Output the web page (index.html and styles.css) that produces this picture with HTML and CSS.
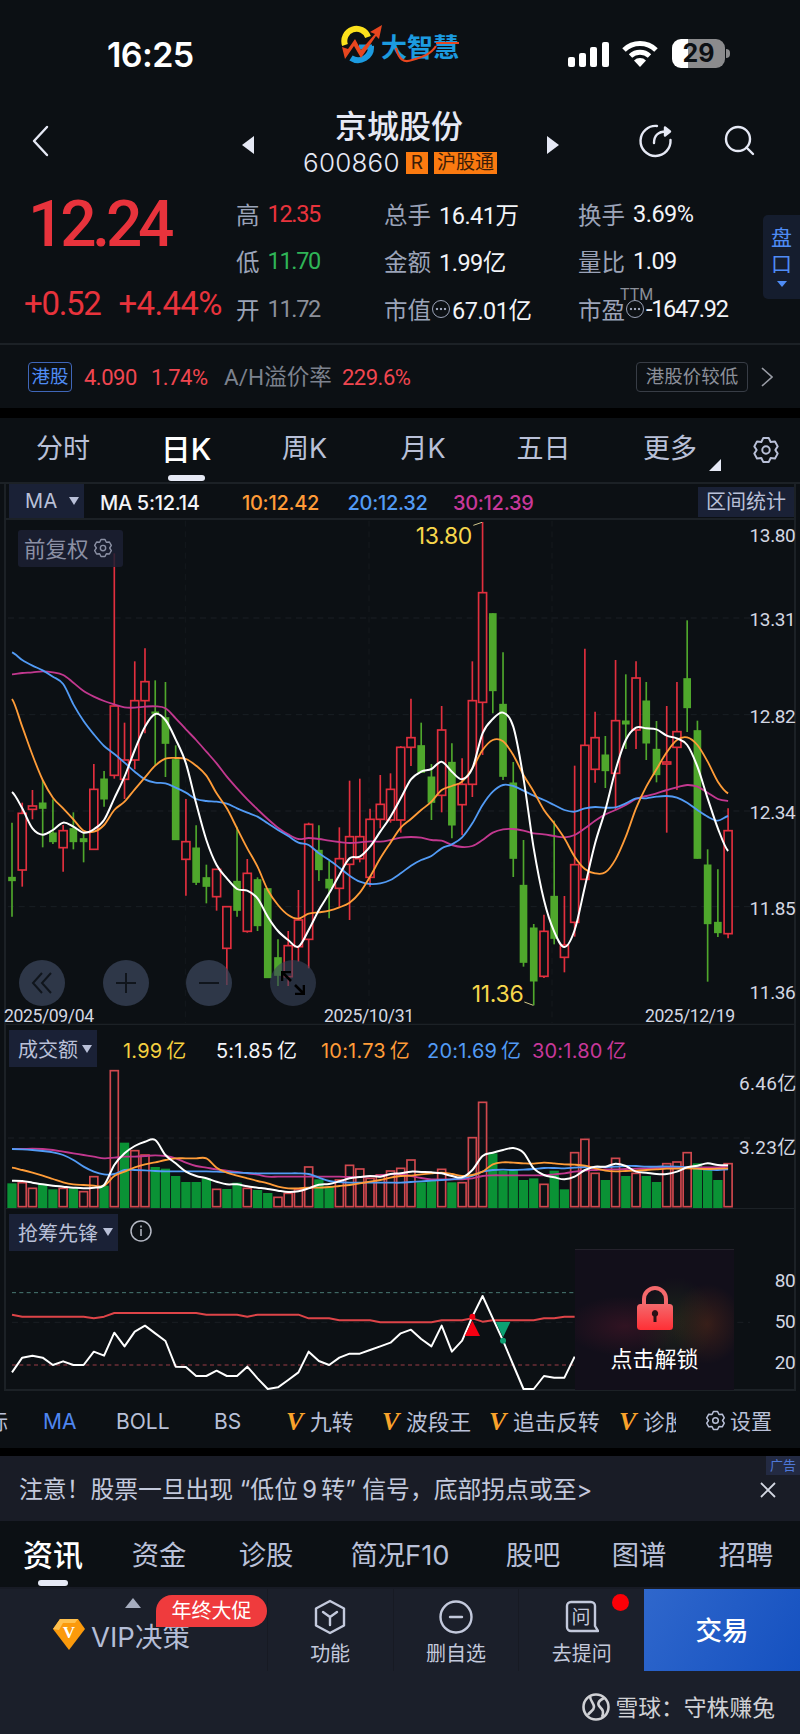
FILE: index.html
```html
<!DOCTYPE html>
<html lang="zh-CN">
    <head>
        <meta charset="utf-8">
        <title>京城股份 600860</title>
        <link rel="stylesheet" href="styles.css">
    </head>
    <body>
        <svg class="sprite" aria-hidden="true">
            <symbol id="gear" viewBox="0 0 24 24">
                <path d="M9.6 1.8h4.8L16 5.1l3.7-.3L22 8.9 20 12l2 3.1-2.3 4.1-3.7-.3-1.6 3.3H9.6L8 18.9l-3.7.3L2 15.1 4 12 2 8.9l2.3-4.1 3.7.3z" />
                <circle cx="12" cy="12" r="3.2" />
            </symbol>
        </svg>

        <div class="status-bar">
            <span class="clock">16:25</span>
            <div class="brand">
                <svg width="44" height="40" viewBox="0 0 44 40">
                    <path d="M4 20A12 12 0 0 1 27 12" fill="none" stroke="#fce11c" stroke-width="6" />
                    <path d="M30 21A13 13 0 0 1 10 33" fill="none" stroke="#1c9be0" stroke-width="6" />
                    <path d="M18 22H31" stroke="#1c9be0" stroke-width="5" />
                    <path d="M1 22l6 2 7-10 6 11L34 9l-5-2L41 0l-3 14-3-3-15 22-7-12-9 13z" fill="#e8461f" />
                </svg>
                <span>大智慧<svg class="swoosh" width="78" height="24" viewBox="0 0 78 24"><path d="M11 9c3 12 8 15 16 12C38 18 46 15 51 7M51 4h23" fill="none" stroke="#e8461f" stroke-width="2.2" /></svg></span>
            </div>
            <div class="signals">
                <svg width="42" height="26" viewBox="0 0 42 26" fill="#fff">
                    <rect x="0" y="16" width="7" height="10" rx="2" />
                    <rect x="11" y="12" width="7" height="14" rx="2" />
                    <rect x="22" y="6" width="7" height="20" rx="2" />
                    <rect x="34" y="1" width="7" height="25" rx="2" />
                </svg>
                <svg width="36" height="27" viewBox="0 0 36 27">
                    <path d="M2 10a23 23 0 0 1 32 0M8.500 16a14 14 0 0 1 19 0" fill="none" stroke="#fff" stroke-width="5" />
                    <path d="M18 27l-6-6.500a8.500 8.500 0 0 1 12 0z" fill="#fff" />
                </svg>
                <span class="battery">29</span>
            </div>
        </div>

        <div class="header">
            <svg class="back" width="18" height="32" viewBox="0 0 18 32"><path d="M15 2L2 16l13 14" /></svg>
            <i class="prev"></i>
            <div class="stock">
                <h1>京城股份</h1>
                <div class="code">
                    <span>600860</span><b>R</b><b>沪股通</b>
                </div>
            </div>
            <i class="next"></i>
            <svg class="share" width="36" height="36" viewBox="0 0 36 36">
                <path d="M19 3A15 15 0 1 0 32.500 17M16 20c0-7 4-11.500 12-11.500" />
                <path d="M27 4.500l5 4-5 4z" fill="#e6e9f5" />
            </svg>
            <svg class="search" width="32" height="32" viewBox="0 0 32 32"><circle cx="14" cy="14" r="12" /><path d="M22.500 22.500l6.500 6.500" /></svg>
        </div>

        <div class="quote">
            <div class="price">
                <strong>12.24</strong>
                <div class="change"><span>+0.52</span><span>+4.44%</span></div>
            </div>
            <dl class="stats">
                <div><dt>高</dt><dd class="up">12.35</dd></div>
                <div><dt>总手</dt><dd>16.41万</dd></div>
                <div><dt>换手</dt><dd>3.69%</dd></div>
                <div><dt>低</dt><dd class="down">11.70</dd></div>
                <div><dt>金额</dt><dd>1.99亿</dd></div>
                <div><dt>量比</dt><dd>1.09</dd></div>
                <div><dt>开</dt><dd class="flat">11.72</dd></div>
                <div><dt>市值</dt><i class="more"></i><dd>67.01亿</dd></div>
                <div><dt>市盈</dt><i class="more"><em>TTM</em></i><dd class="tight">-1647.92</dd></div>
            </dl>
            <div class="handicap">盘<br>口<i></i></div>
        </div>

        <div class="hk-row">
            <span class="hk-tag">港股</span>
            <span class="hk-num hk-price">4.090</span>
            <span class="hk-num hk-rate">1.74%</span>
            <span class="hk-label">A/H溢价率</span>
            <span class="hk-num">229.6%</span>
            <span class="hk-note">港股价较低</span>
            <svg width="12" height="20" viewBox="0 0 12 20"><path d="M1 1l10 9-10 9" /></svg>
        </div>

        <div class="period-tabs">
            <span>分时</span>
            <span class="active">日K</span>
            <span>周K</span>
            <span>月K</span>
            <span>五日</span>
            <span class="has-more">更多</span>
            <svg class="gear" width="28" height="28"><use href="#gear" /></svg>
        </div>

        <div class="charts">
            <div class="legend legend-ma">
                <span class="picker">MA<i></i></span>
                <span class="ma5">MA 5:12.14</span>
                <span class="ma10">10:12.42</span>
                <span class="ma20">20:12.32</span>
                <span class="ma30">30:12.39</span>
                <span class="range-btn">区间统计</span>
            </div>
            <div class="plot">
                <svg id="kline" width="800" height="505" viewBox="0 60 2400 1515"></svg>
                <div class="adjust">前复权<svg class="gear" width="20" height="20"><use href="#gear" /></svg></div>
                <div class="tools">
                    <span><svg width="24" height="24" viewBox="0 0 24 24"><path d="M12 2L3 12l9 10M21 2l-9 10 9 10" /></svg></span>
                    <span><svg width="24" height="24" viewBox="0 0 24 24"><path d="M2 12h20M12 2v20" /></svg></span>
                    <span><svg width="24" height="24" viewBox="0 0 24 24"><path d="M2 12h20" /></svg></span>
                    <span class="expand"><svg width="24" height="24" viewBox="0 0 24 24"><path d="M1 10V1h9M1 1l9 9M23 14v9h-9M23 23l-9-9" /></svg></span>
                </div>
            </div>

            <div class="legend legend-vol">
                <span class="picker">成交额<i></i></span>
                <span class="vol">1.99&thinsp;亿</span>
                <span class="ma5">5:1.85&thinsp;亿</span>
                <span class="ma10">10:1.73&thinsp;亿</span>
                <span class="ma20">20:1.69&thinsp;亿</span>
                <span class="ma30">30:1.80&thinsp;亿</span>
            </div>
            <svg id="volume" class="plot" width="800" height="142" viewBox="0 141 2400 426"></svg>

            <div class="legend legend-ind">
                <span class="picker">抢筹先锋<i></i></span>
                <svg width="22" height="22" viewBox="0 0 22 22"><circle cx="11" cy="11" r="10" /><path d="M11 9v7M11 5.500v2" /></svg>
            </div>
            <div class="plot">
                <svg id="indicator" width="800" height="139" viewBox="0 693 2400 417"></svg>
                <div class="locked">
                    <svg width="36" height="44" viewBox="0 0 36 44">
                        <defs><linearGradient id="lock" x2="0" y2="1"><stop offset="0" stop-color="#f4696c" /><stop offset="1" stop-color="#ff2f35" /></linearGradient></defs>
                        <path d="M7 20v-7a11 11 0 0 1 22 0v7" fill="none" stroke="#f4696c" stroke-width="4" />
                        <rect y="18" width="36" height="26" rx="3.500" fill="url(#lock)" />
                        <path d="M18 24a3.500 3.500 0 0 1 1.500 6.500V36h-3v-5.500A3.500 3.500 0 0 1 18 24z" fill="#2a1015" />
                    </svg>
                    点击解锁
                </div>
            </div>
        </div>

        <div class="indicator-tabs">
            <div class="scroller">
                <span class="cut">标</span>
                <span class="active">MA</span>
                <span>BOLL</span>
                <span>BS</span>
                <span><b>V</b>九转</span>
                <span><b>V</b>波段王</span>
                <span><b>V</b>追击反转</span>
                <span><b>V</b>诊股</span>
            </div>
            <span class="settings"><svg class="gear" width="21" height="21"><use href="#gear" /></svg>设置</span>
        </div>

        <div class="notice">
            <span>注意！股票一旦出现 “低位&thinsp;9&thinsp;转” 信号，底部拐点或至&gt;</span>
            <em>广告</em>
            <svg width="16" height="16" viewBox="0 0 16 16"><path d="M1 1l14 14M15 1L1 15" /></svg>
        </div>

        <div class="info-tabs">
            <span class="active">资讯</span>
            <span>资金</span>
            <span>诊股</span>
            <span>简况F10</span>
            <span>股吧</span>
            <span>图谱</span>
            <span>招聘</span>
        </div>

        <div class="bottom-bar">
            <div class="vip">
                <svg width="32" height="31" viewBox="0 0 32 31">
                    <path d="M7 0h18l7 10-16 21L0 10z" fill="#fb9a0c" />
                    <path d="M7 0h18l-3 4H10zM0 10l7-10 3 4-4 7z" fill="#ffc04d" />
                    <text x="16" y="19" text-anchor="middle">V</text>
                </svg>
                VIP决策
                <i></i>
                <span class="promo">年终大促</span>
            </div>
            <div class="action">
                <svg width="34" height="36" viewBox="0 0 34 36"><path d="M17 2l14 7.500v17L17 34 3 26.500v-17zM10 13l7 5 7-5M17 18v8" /></svg>
                功能
            </div>
            <div class="action">
                <svg width="34" height="36" viewBox="0 0 34 36"><circle cx="17" cy="18" r="15.500" /><path d="M11 18h12" /></svg>
                删自选
            </div>
            <div class="action ask">
                <svg width="34" height="36" viewBox="0 0 34 36"><path d="M6 3h20a4 4 0 0 1 4 4v20l3 5H6a4 4 0 0 1-4-4V7a4 4 0 0 1 4-4z" /><text x="16" y="25" text-anchor="middle">问</text></svg>
                去提问
            </div>
            <div class="trade">交易</div>
        </div>

        <div class="watermark">
            <svg width="28" height="28" viewBox="0 0 28 28"><circle cx="14" cy="14" r="12.500" /><path d="M8 3c0 5 4 7 4 11s-5 5-6 8M22 5c-6 3-7 6-4 9s4 5 2 10" /></svg>
            雪球：守株赚兔
        </div>

        <script src="chart.js"></script>
    </body>
</html>
```
FILE: styles.css
```css
:root {
    --bg: #0c1014;
    --panel: #1b1f2a;
    --chip: #1a2136;
    --line: #1c2126;
    --text: #e6e9f5;
    --muted: #9ba3b8;
    --tab: #b9c0d8;
    --red: #e8333c;
    --green: #2fb457;
    --blue: #4f8cf5;
    --num: Roboto, "Noto Sans CJK SC", sans-serif;
    --ui: Inter, "Noto Sans CJK SC", sans-serif;
}

* {
    box-sizing: border-box;
}

body {
    margin: 0;
    width: 800px;
    height: 1734px;
    overflow: hidden;
    background: var(--bg);
    color: var(--text);
    font-family: var(--ui);
}

svg {
    display: block;
    flex: none;
}

i,
em {
    font-style: normal;
}

span,
dt,
dd {
    white-space: nowrap;
}

.sprite {
    width: 0;
    height: 0;
    position: absolute;
}

.gear {
    fill: none;
    stroke: currentColor;
    stroke-width: 1.7;
    stroke-linejoin: round;
}

/* status bar */

.status-bar {
    height: 96px;
    display: flex;
    align-items: flex-start;
}

.clock {
    width: 341px;
    padding: 34px 0 0 107px;
    font-size: 34px;
    line-height: 42px;
    font-weight: 600;
    letter-spacing: -0.6px;
    color: #fff;
}

.brand {
    width: 227px;
    padding-top: 25px;
    display: flex;
}

.brand span {
    position: relative;
    margin: 2px 0 0 -4px;
    font: 700 26px/38px "Noto Sans CJK SC", sans-serif;
    color: #1c9be0;
}

.swoosh {
    position: absolute;
    left: 4px;
    top: 12px;
}

.signals {
    display: flex;
    align-items: center;
    padding-top: 39px;
}

.signals svg + svg {
    margin: 0 14px 0 12px;
}

.battery {
    position: relative;
    width: 53px;
    height: 29px;
    border-radius: 9px;
    background: linear-gradient(90deg, #fff 16px, #8b8b8d 16px);
    color: #0c1014;
    font-size: 25px;
    line-height: 29px;
    font-weight: 700;
    text-align: center;
}

.battery::after {
    content: "";
    position: absolute;
    right: -5px;
    top: 10px;
    width: 4px;
    height: 9px;
    border-radius: 0 4px 4px 0;
    background: #8b8b8d;
}

/* header */

.header {
    height: 94px;
    display: flex;
    align-items: center;
    padding-bottom: 4px;
}

.header svg {
    fill: none;
    stroke: var(--text);
    stroke-width: 2.4;
    stroke-linecap: round;
    stroke-linejoin: round;
}

.back {
    margin-left: 32px;
}

.prev,
.next {
    border: 9px solid transparent;
    margin-top: 7px;
}

.prev {
    border-right: 12px solid var(--text);
    border-left: 0;
    margin-left: 192px;
}

.next {
    border-left: 12px solid var(--text);
    border-right: 0;
}

.stock {
    width: 293px;
    padding-top: 3px;
    display: flex;
    flex-direction: column;
    align-items: center;
}

h1 {
    margin: 0 0 0 -3px;
    font-size: 32px;
    line-height: 41px;
    font-weight: 500;
}

.code {
    display: flex;
    align-items: center;
    font-size: 26px;
    line-height: 32px;
    font-weight: 300;
    gap: 6px;
    margin-right: 1px;
}

.code span {
    letter-spacing: 0.2px;
}

.code b {
    padding: 0 3px;
    height: 22px;
    background: #fb7a10;
    color: #3a1c08;
    font-size: 19px;
    line-height: 22px;
    font-weight: 400;
}

.code b:first-of-type {
    padding: 0 5px;
}

.share {
    margin-left: 79px;
}

.search {
    margin-left: 50px;
}

/* quote */

.quote {
    height: 155px;
    display: flex;
    border-bottom: 2px solid var(--line);
    position: relative;
    font-family: var(--num);
}

.price {
    width: 236px;
    padding-left: 24px;
    color: var(--red);
}

.price strong {
    display: block;
    margin: 3px 0 0 4px;
    font-size: 64px;
    line-height: 64px;
    font-weight: 500;
    letter-spacing: -4.2px;
}

.change {
    display: flex;
    gap: 18px;
    margin-top: 28px;
    font-size: 33px;
    line-height: 38px;
    letter-spacing: -1.3px;
}

.change span + span {
    letter-spacing: -0.7px;
}

.stats {
    margin: 0;
    display: grid;
    grid-template-columns: 148px 194px 180px;
    grid-template-rows: repeat(3, 47.5px);
    font-size: 23.5px;
}

.stats div {
    display: flex;
    align-items: center;
}

dt {
    color: var(--muted);
}

dd {
    margin: 0 0 0 8px;
    color: #f3f4f8;
    letter-spacing: -0.5px;
}

.stats .up,
.stats .down,
.stats .flat,
.stats .tight {
    letter-spacing: -1.3px;
}

.stats .up {
    color: var(--red);
}

.stats .down {
    color: var(--green);
}

.stats .flat {
    color: #8b8f99;
}

.more {
    position: relative;
    width: 18px;
    height: 18px;
    border: 1.5px solid var(--muted);
    border-radius: 50%;
    margin: 0 2px 0 1px;
    background: radial-gradient(circle, var(--muted) 1.2px, transparent 1.6px) 50% 50% / 4px 4px no-repeat,
        radial-gradient(circle, var(--muted) 1.2px, transparent 1.6px) 2px 50% / 4px 4px no-repeat,
        radial-gradient(circle, var(--muted) 1.2px, transparent 1.6px) 10px 50% / 4px 4px no-repeat;
}

.more + dd {
    margin-left: 0;
}

.more em {
    position: absolute;
    left: -7px;
    top: -15px;
    font-size: 16px;
    line-height: 18px;
    color: #8b8f99;
}

.handicap {
    position: absolute;
    right: 0;
    top: 25px;
    width: 37px;
    height: 84px;
    padding-top: 10px;
    border-radius: 5px 0 0 5px;
    background: #151d2e;
    color: var(--blue);
    font-size: 21px;
    line-height: 26px;
    text-align: center;
}

.handicap i {
    display: block;
    width: 10px;
    margin: 4px auto 0;
    border: 5px solid transparent;
    border-top: 6px solid var(--blue);
}

/* hong kong share */

.hk-row {
    height: 73px;
    border-bottom: 10px solid #000;
    display: flex;
    align-items: center;
    padding: 1px 0 0 28px;
}

.hk-tag {
    border: 1.5px solid #3f66b8;
    border-radius: 4px;
    width: 44px;
    height: 30px;
    color: var(--blue);
    font-size: 18.5px;
    line-height: 26px;
    text-align: center;
}

.hk-num {
    font-family: var(--num);
    font-size: 22px;
    color: #f04650;
    letter-spacing: -0.5px;
}

.hk-price {
    margin-left: 12px;
    width: 67px;
}

.hk-rate {
    width: 73px;
}

.hk-label {
    width: 118px;
    margin-top: -4px;
    font-family: var(--num);
    font-size: 22.6px;
    color: #7c828e;
}

.hk-note {
    margin: 0 13px 0 auto;
    width: 112px;
    height: 30px;
    border: 1.5px solid #383d46;
    border-radius: 4px;
    color: #8b8f99;
    font-size: 18.5px;
    line-height: 26px;
    text-align: center;
}

.hk-row svg {
    margin-right: 27px;
    fill: none;
    stroke: #9a9da6;
    stroke-width: 1.6;
}

/* period tabs */

.period-tabs {
    height: 66px;
    display: grid;
    grid-template-columns: 126px 120px 117px 120px 121px 132px 60px;
    justify-items: center;
    border-bottom: 2px solid var(--line);
    font-size: 27px;
    line-height: 62px;
    color: var(--tab);
}

.period-tabs .active,
.info-tabs .active {
    position: relative;
    font-size: 30px;
    font-weight: 500;
    color: #fff;
}

.active::after {
    content: "";
    position: absolute;
    left: 50%;
    bottom: 1px;
    width: 37px;
    height: 6px;
    margin-left: -18px;
    border-radius: 3px;
    background: var(--text);
}

.has-more {
    position: relative;
}

.has-more::after {
    content: "";
    position: absolute;
    right: -24px;
    top: 41px;
    border-left: 12px solid transparent;
    border-bottom: 12px solid var(--text);
}

.period-tabs .gear {
    margin-top: 18px;
}

/* charts */

.charts {
    margin: 0 4px;
    height: 907px;
    border: solid var(--line);
    border-width: 0 2px 2px;
}

.plot {
    position: relative;
    margin: 0 -6px;
}

.legend {
    display: flex;
    align-items: center;
}

.picker {
    display: flex;
    align-items: center;
    justify-content: space-between;
    height: 37px;
    padding: 0 5px 0 9px;
    margin-left: 3px;
    background: var(--chip);
    color: var(--tab);
    font-size: 20px;
}

.picker i {
    border: 5px solid transparent;
    border-top: 8px solid var(--tab);
    border-bottom: 0;
}

.ma5 {
    color: #f3f4f8;
}

.ma10 {
    color: #ff9c38;
}

.ma20 {
    color: #529bf5;
}

.ma30 {
    color: #c8389a;
}

.legend-ma {
    height: 36px;
    border-bottom: 2px solid var(--line);
    font-size: 20px;
    font-weight: 500;
    letter-spacing: -0.3px;
}

.legend-ma .picker {
    width: 75px;
    height: 34px;
    padding-left: 16px;
    font-weight: 400;
    letter-spacing: 0.5px;
}

.legend-ma .ma5 {
    margin-left: 16px;
    width: 142px;
}

.legend-ma > span:not(.picker):not(.range-btn) {
    padding-top: 3px;
}

.legend-ma .ma10,
.legend-ma .ma20 {
    width: 105.5px;
}

.range-btn {
    margin: 1px 0 0 auto;
    width: 96px;
    height: 30px;
    background: var(--chip);
    color: var(--tab);
    font-size: 20px;
    line-height: 31px;
    font-weight: 400;
    letter-spacing: 0;
    text-align: center;
}

.adjust {
    position: absolute;
    left: 18px;
    top: 10px;
    width: 105px;
    height: 37px;
    display: flex;
    align-items: center;
    gap: 4px;
    padding: 0 0 3px 6px;
    border-radius: 3px;
    background: rgba(28, 32, 50, 0.85);
    color: #8b90a4;
    font-size: 21.5px;
}

.adjust .gear {
    margin-top: 2px;
}

.tools {
    position: absolute;
    left: 19px;
    top: 440px;
    display: flex;
    gap: 37.7px;
}

.tools span {
    width: 46px;
    height: 46px;
    display: flex;
    align-items: center;
    justify-content: center;
    border-radius: 50%;
    background: rgba(58, 68, 90, 0.75);
}

.tools svg {
    fill: none;
    stroke: #10151c;
    stroke-width: 2;
}

.tools .expand {
    background: rgba(58, 68, 90, 0.6);
}

.tools .expand svg {
    stroke: #000;
    stroke-width: 2.6;
}

.legend-vol {
    height: 42px;
    font-size: 20px;
    letter-spacing: 0.2px;
    padding-top: 5px;
}

.legend-vol span:not(.picker) {
    padding-top: 2px;
}

.legend-vol .picker {
    width: 88px;
    letter-spacing: 0;
}

.legend-vol .vol {
    margin-left: 26px;
    width: 93px;
    color: #f5d040;
}

.legend-vol .ma5 {
    width: 105px;
}

.legend-vol .ma10 {
    width: 106px;
}

.legend-vol .ma20 {
    width: 105px;
}

.legend-ind {
    height: 42px;
}

.legend-ind .picker {
    width: 109px;
    margin-top: 4px;
}

.legend-ind svg {
    margin: 1px 0 0 12px;
    fill: none;
    stroke: #b5b9c4;
    stroke-width: 1.5;
}

.locked {
    position: absolute;
    left: 575px;
    top: -2px;
    width: 159px;
    height: 141px;
    padding-top: 36px;
    display: flex;
    flex-direction: column;
    align-items: center;
    gap: 14px;
    border-top: 1px solid #25222c;
    background: radial-gradient(ellipse 36px 40px at 132px 74px, rgba(70, 35, 25, 0.7), transparent),
        radial-gradient(ellipse 60px 30px at 50px 76px, rgba(56, 20, 36, 0.8), transparent),
        radial-gradient(ellipse 40px 45px at 100px 72px, rgba(32, 46, 26, 0.7), transparent), #120f1a;
    color: #fff;
    font-size: 22px;
    line-height: 30px;
}

.grid {
    fill: none;
    stroke: #1a1f24;
    stroke-width: 3;
    stroke-dasharray: 18 14;
}

.grid-v {
    stroke: #14191d;
}

.frame {
    stroke: var(--line);
    stroke-width: 4;
}

.axis {
    font-family: var(--num);
    font-size: 57px;
    letter-spacing: -1.2px;
    fill: #d3d7e2;
    text-anchor: end;
}

.axis-amount {
    letter-spacing: 1px;
}

.date {
    font-family: var(--num);
    font-size: 53px;
    letter-spacing: -1.3px;
    fill: #d3d7e2;
}

.peak {
    font-size: 69px;
    font-weight: 400;
    letter-spacing: -1px;
    fill: #f7d74c;
    text-anchor: end;
}

.peak-line {
    stroke: #cfc58a;
    stroke-width: 3;
}

.candle-up,
.vol-up {
    fill: var(--bg);
    stroke: #e22f3e;
    stroke-width: 5;
}

.candle-down {
    fill: #4fa72c;
    stroke: #4fa72c;
    stroke-width: 5;
}

.vol-up {
    stroke: #d0484e;
    fill: none;
}

.vol-down {
    fill: #0a9235;
}

.curve {
    fill: none;
    stroke-width: 5.5;
    stroke-linejoin: round;
}

.curve-5 {
    stroke: #fff;
    stroke-width: 6;
}

.curve-10 {
    stroke: #ff9c38;
}

.curve-20 {
    stroke: #529bf5;
}

.curve-30 {
    stroke: #c2388f;
}

.curve-cost {
    stroke: #de4448;
    stroke-width: 6;
}

.level-high {
    stroke: #4a7a74;
    stroke-dasharray: 12 10;
}

.level-low {
    stroke: #9a3c46;
    stroke-dasharray: 12 10;
}

.buy {
    fill: #f50012;
}

.sell {
    fill: #0ca173;
}

/* indicator tabs */

.indicator-tabs {
    height: 65px;
    border-bottom: 8px solid #000;
    padding-top: 4px;
    display: flex;
    align-items: center;
    font-size: 21px;
    color: var(--tab);
}

.scroller {
    width: 676px;
    overflow: hidden;
    display: flex;
}

.scroller span {
    flex: none;
    line-height: 32px;
}

.scroller .cut {
    margin-left: -13px;
    width: 56px;
}

.scroller .active {
    color: #4f86f0;
    width: 73px;
}

.scroller .active::after {
    display: none;
}

.scroller span:nth-child(3) {
    width: 98px;
}

.scroller span:nth-child(4) {
    width: 72px;
}

.scroller span:nth-child(5) {
    width: 96px;
}

.scroller span:nth-child(6) {
    width: 107px;
}

.scroller span:nth-child(7) {
    width: 130px;
}

.scroller span:nth-child(n + 5) {
    font-size: 21.7px;
}

.scroller b {
    display: inline-block;
    width: 24px;
    font: italic 700 26px/30px "Liberation Serif", serif;
    color: #f9a32b;
}

.settings {
    display: flex;
    align-items: center;
    gap: 4px;
    margin-left: 29px;
    padding-bottom: 3px;
}

/* ad notice */

.notice {
    position: relative;
    height: 65px;
    background: #191c26;
    padding: 3px 24px 0 19px;
    display: flex;
    align-items: center;
    justify-content: space-between;
    color: #c3c9dc;
    font-size: 23.8px;
}

.notice span {
    padding-bottom: 6px;
}

.notice em {
    position: absolute;
    right: 0;
    top: 0;
    width: 34px;
    height: 19px;
    background: #232a42;
    color: #4f78d8;
    font-size: 13px;
    line-height: 18px;
    text-align: center;
}

.notice svg {
    stroke: #d3d7e2;
    stroke-width: 1.8;
}

/* info tabs */

.info-tabs {
    height: 66px;
    display: grid;
    grid-template-columns: 106px 106px 108px 160px 106px 106px 108px;
    justify-items: center;
    font-size: 27.3px;
    line-height: 69px;
    color: var(--tab);
}

.info-tabs .active::after {
    width: 30px;
    margin-left: -15px;
    bottom: 4px;
}

/* bottom bar */

.bottom-bar {
    height: 84px;
    display: flex;
    background: var(--panel);
    border-top: 2px solid #181b25;
}

.vip {
    position: relative;
    width: 267px;
    padding: 9px 0 0 53px;
    display: flex;
    align-items: center;
    gap: 6px;
    font-size: 27.5px;
    color: #b4bdd6;
}

.vip text {
    font: 700 17px "Liberation Serif", serif;
    fill: #fff;
}

.vip i {
    position: absolute;
    left: 125px;
    top: 9px;
    border: 8px solid transparent;
    border-top: 0;
    border-bottom: 10px solid #a6adbf;
}

.promo {
    position: absolute;
    left: 156px;
    top: 6px;
    width: 111px;
    height: 32px;
    border-radius: 16px 16px 16px 0;
    background: #ef3b3d;
    color: #fff;
    font-size: 20px;
    line-height: 33px;
    text-align: center;
}

.action {
    position: relative;
    width: 126px;
    padding-top: 10px;
    display: flex;
    flex-direction: column;
    align-items: center;
    gap: 4px;
    font-size: 20px;
    line-height: 30px;
    color: #c3c9dc;
    border-left: 1px solid #171a23;
}

.action svg {
    fill: none;
    stroke: #c3c9dc;
    stroke-width: 2.4;
    stroke-linejoin: round;
    stroke-linecap: round;
}

.action text {
    font-size: 19px;
    fill: #c3c9dc;
    stroke: none;
}

.ask::after {
    content: "";
    position: absolute;
    left: 93px;
    top: 5px;
    width: 17px;
    height: 17px;
    border-radius: 50%;
    background: #fb0007;
}

.trade {
    margin-left: auto;
    width: 156px;
    background: linear-gradient(120deg, #2f67cc, #1551c0);
    color: #fff;
    font-size: 26.5px;
    line-height: 83px;
    font-weight: 500;
    text-align: center;
}

.watermark {
    height: 63px;
    padding: 8px 25px 0 0;
    display: flex;
    align-items: center;
    justify-content: flex-end;
    gap: 5px;
    background: var(--panel);
    color: #d0d1d5;
    font-size: 22.8px;
}

.watermark svg {
    fill: none;
    stroke: #d0d1d5;
    stroke-width: 2.6;
}
```
FILE: chart.js
```js
// All plots are drawn on a 2400 wide canvas, one column per trading day.
const NS = 'http://www.w3.org/2000/svg';
const START = 36;
const STEP = 30.69;

// [rising, high, body top, body bottom, low]
const candles = [
    [0, 968, 1131, 1143, 1250], [1, 908, 940, 1110, 1160], [1, 870, 918, 928, 958], [0, 840, 908, 926, 1042],
    [0, 898, 998, 1026, 1032], [1, 975, 992, 1043, 1115], [0, 937, 985, 1026, 1048], [0, 1000, 1015, 1026, 1087],
    [1, 792, 868, 1048, 1050], [0, 813, 836, 898, 920], [1, 160, 618, 826, 836], [1, 668, 780, 838, 897],
    [1, 484, 602, 780, 808], [1, 445, 545, 602, 700], [0, 541, 635, 641, 797], [0, 546, 652, 731, 831],
    [0, 736, 778, 1020, 1020], [1, 897, 1025, 1078, 1187], [0, 976, 1043, 1148, 1155], [0, 1094, 1132, 1160, 1210],
    [1, 1108, 1108, 1190, 1232], [1, 1218, 1220, 1345, 1455], [0, 980, 1143, 1232, 1250], [1, 1077, 1120, 1294, 1298],
    [0, 1132, 1138, 1278, 1293], [0, 1165, 1165, 1434, 1434], [0, 1318, 1372, 1427, 1458], [1, 1293, 1337, 1430, 1458],
    [1, 1170, 1260, 1340, 1385], [1, 968, 973, 1318, 1405], [0, 976, 1050, 1110, 1143], [0, 1082, 1137, 1165, 1255],
    [1, 982, 1076, 1165, 1220], [1, 842, 1010, 1093, 1260], [1, 836, 1010, 1076, 1087], [1, 926, 958, 1132, 1160],
    [1, 825, 913, 958, 985], [1, 820, 868, 960, 968], [1, 738, 742, 960, 998], [1, 596, 713, 742, 798],
    [0, 668, 736, 818, 818], [0, 792, 830, 908, 960], [1, 618, 690, 886, 937], [0, 730, 786, 976, 1015],
    [1, 775, 853, 914, 1006], [1, 484, 602, 853, 891], [1, 66, 278, 607, 765], [0, 340, 340, 573, 640],
    [0, 457, 612, 830, 840], [0, 786, 848, 1076, 1131], [0, 1020, 1155, 1388, 1400], [0, 1272, 1283, 1444, 1516],
    [1, 1244, 1294, 1429, 1434], [0, 962, 1188, 1316, 1333], [1, 1188, 1335, 1372, 1417], [1, 797, 1094, 1267, 1310],
    [1, 446, 736, 1138, 1138], [1, 635, 713, 808, 848], [0, 708, 764, 813, 864], [1, 480, 662, 820, 930],
    [0, 523, 662, 673, 747], [1, 484, 534, 690, 747], [0, 546, 602, 730, 780], [0, 663, 747, 825, 847],
    [1, 618, 786, 792, 998], [1, 546, 695, 742, 870], [0, 361, 535, 624, 696], [0, 662, 691, 1076, 1076],
    [0, 1048, 1094, 1272, 1445], [0, 1108, 1266, 1299, 1311], [1, 925, 992, 1301, 1315],
];

const priceLines = {
    30: [523, 519, 517, 514, 517, 525, 548, 573, 590, 603, 613, 622, 623, 620, 619, 625, 655, 688, 720, 755, 790, 830, 865, 898, 928, 957, 983, 1003, 1017, 1014, 1017, 1022, 1026, 1029, 1027, 1024, 1025, 1020, 1013, 1011, 1013, 1020, 1022, 1035, 1041, 1038, 1020, 998, 988, 987, 992, 1000, 1003, 1008, 1012, 1005, 985, 962, 943, 930, 915, 897, 888, 880, 870, 862, 855, 860, 878, 897, 903],
    20: [457, 480, 497, 511, 530, 552, 613, 663, 703, 738, 762, 788, 815, 838, 848, 850, 863, 878, 897, 903, 905, 911, 925, 938, 950, 970, 990, 1008, 1028, 1035, 1060, 1080, 1103, 1127, 1145, 1152, 1150, 1140, 1120, 1097, 1080, 1068, 1045, 1033, 1012, 970, 915, 875, 855, 858, 872, 887, 900, 915, 930, 935, 925, 921, 923, 922, 910, 895, 895, 890, 888, 893, 908, 930, 950, 962, 948],
    10: [597, 680, 765, 840, 893, 925, 958, 992, 995, 975, 930, 905, 868, 832, 797, 776, 774, 777, 797, 827, 880, 925, 985, 1045, 1100, 1170, 1215, 1245, 1256, 1241, 1237, 1232, 1222, 1208, 1178, 1130, 1075, 1028, 983, 957, 930, 905, 870, 858, 845, 805, 750, 720, 724, 765, 825, 875, 930, 970, 1015, 1070, 1107, 1120, 1117, 1078, 1010, 925, 860, 808, 757, 720, 712, 735, 785, 845, 880],
    5: [876, 925, 985, 1004, 990, 968, 980, 998, 988, 960, 895, 830, 750, 680, 642, 660, 718, 790, 910, 1020, 1095, 1135, 1167, 1172, 1195, 1250, 1293, 1320, 1340, 1290, 1230, 1180, 1125, 1075, 1070, 1040, 995, 950, 895, 838, 815, 807, 785, 815, 838, 805, 700, 657, 638, 680, 835, 1045, 1200, 1295, 1341, 1290, 1160, 1030, 930, 810, 720, 683, 685, 688, 707, 715, 735, 800, 895, 985, 1053],
};

// r = rising day, g = falling day, ten days per group
const volumeDays = 'grrggrgrrg rgrrgggggg rggrggrrrr ggrrrrrrrr ggrgrrrggg ggrggrrrgr grggrrrggg r'.replaceAll(' ', '');
const volumeTops = [490, 488, 505, 493, 508, 505, 505, 515, 470, 497, 152, 368, 392, 405, 441, 446, 468, 486, 486, 475, 508, 507, 488, 505, 510, 519, 532, 520, 508, 441, 478, 500, 480, 436, 447, 475, 465, 453, 445, 420, 487, 482, 448, 487, 488, 353, 247, 400, 452, 448, 480, 475, 493, 452, 508, 398, 358, 460, 480, 415, 468, 460, 468, 486, 431, 426, 398, 430, 445, 480, 431];

const volumeLines = {
    5: [482, 483, 488, 493, 497, 500, 503, 505, 503, 495, 435, 400, 378, 365, 360, 405, 430, 455, 468, 475, 485, 493, 493, 499, 503, 507, 512, 516, 514, 505, 494, 492, 484, 475, 471, 468, 470, 462, 460, 455, 456, 457, 460, 468, 472, 450, 408, 398, 390, 384, 398, 445, 465, 472, 478, 470, 450, 440, 440, 431, 438, 455, 458, 462, 462, 455, 442, 437, 430, 435, 436],
    10: [443, 450, 458, 467, 477, 487, 493, 495, 497, 497, 468, 455, 442, 433, 427, 420, 415, 415, 415, 415, 443, 458, 467, 475, 483, 490, 500, 505, 505, 503, 503, 501, 498, 495, 490, 485, 480, 473, 468, 467, 463, 460, 458, 462, 468, 465, 455, 433, 427, 428, 430, 431, 428, 430, 433, 434, 437, 445, 452, 454, 453, 452, 450, 448, 446, 446, 445, 446, 447, 446, 445],
    20: [387, 388, 390, 393, 397, 405, 420, 440, 455, 463, 462, 450, 450, 451, 453, 454, 454, 454, 454, 454, 455, 456, 458, 459, 460, 460, 460, 460, 460, 462, 473, 483, 486, 488, 488, 488, 488, 488, 488, 486, 484, 482, 480, 478, 475, 468, 455, 450, 449, 450, 449, 447, 444, 444, 445, 443, 441, 441, 441, 440, 438, 438, 440, 440, 439, 440, 442, 446, 449, 450, 448],
    30: [387, 387, 386, 387, 390, 395, 400, 405, 410, 415, 413, 410, 410, 408, 406, 408, 415, 428, 438, 443, 448, 452, 456, 460, 464, 470, 470, 470, 470, 470, 470, 470, 470, 471, 471, 469, 466, 463, 463, 468, 474, 478, 478, 478, 478, 475, 468, 466, 466, 466, 466, 466, 466, 463, 460, 455, 452, 450, 448, 448, 447, 446, 445, 444, 443, 442, 442, 442, 442, 442, 440],
};

const cost = [884, 890, 890, 890, 890, 890, 890, 890, 895, 890, 879, 879, 879, 879, 879, 879, 879, 879, 879, 884, 884, 884, 884, 890, 884, 884, 884, 884, 884, 895, 895, 895, 901, 901, 901, 901, 907, 907, 907, 907, 907, 907, 901, 901, 901, 895, 905, 901, 901, 901, 901, 901, 895, 895, 890, 890];
const chips = [1057, 1013, 1007, 1013, 1035, 1024, 1035, 1035, 995, 1007, 938, 979, 935, 917, 940, 963, 1040, 1041, 1068, 1068, 1052, 1068, 1068, 1040, 1075, 1107, 1102, 1080, 1057, 995, 1023, 1035, 1013, 1001, 1001, 990, 979, 968, 940, 929, 957, 979, 917, 995, 962, 890, 828, 895, 962, 1035, 1107, 1107, 1068, 1073, 1073, 1010];

const x = i => START + i * STEP;

function add(parent, tag, attrs, text) {
    const el = document.createElementNS(NS, tag);
    for (const key in attrs) el.setAttribute(key, attrs[key]);
    if (text) el.textContent = text;
    parent.appendChild(el);
}

function smooth(ys) {
    let d = `M${x(0)} ${ys[0]}`;
    for (let i = 1; i < ys.length; i++) {
        const before = ys[i - 2] ?? ys[i - 1];
        const after = ys[i + 1] ?? ys[i];
        const c1 = ys[i - 1] + (ys[i] - before) / 6;
        const c2 = ys[i] - (after - ys[i - 1]) / 6;
        d += `C${x(i - 1) + STEP / 3} ${c1} ${x(i) - STEP / 3} ${c2} ${x(i)} ${ys[i]}`;
    }
    return d;
}

function drawLines(svg, lines) {
    for (const n of [30, 20, 10, 5]) {
        add(svg, 'path', { class: `curve curve-${n}`, d: smooth(lines[n]) });
    }
}

function drawKline() {
    const svg = document.getElementById('kline');
    add(svg, 'path', { class: 'grid', d: 'M24 354H2250M24 644H2250M24 933H2250M24 1220H2250' });
    add(svg, 'path', { class: 'grid grid-v', d: 'M556 62V1570M1107 62V1570M1656 62V1570' });
    add(svg, 'path', { class: 'frame', d: 'M12 1573H2388' });

    candles.forEach(([up, high, top, bottom, low], i) => {
        const cls = up ? 'candle-up' : 'candle-down';
        add(svg, 'path', { class: cls, d: `M${x(i)} ${high}V${low}` });
        const half = up ? 12 : 9;
        const inset = up ? 0 : 2;
        add(svg, 'rect', { class: cls, x: x(i) - half, y: top + inset, width: half * 2, height: Math.max(bottom - top - inset * 2, 2) });
    });
    drawLines(svg, priceLines);

    [['13.80', 127], ['13.31', 379], ['12.82', 668], ['12.34', 957], ['11.85', 1245], ['11.36', 1497]].forEach(([label, y]) => {
        add(svg, 'text', { class: 'axis', x: 2386, y }, label);
    });
    [['2025/09/04', 12], ['2025/10/31', 972], ['2025/12/19', 1935]].forEach(([label, left]) => {
        add(svg, 'text', { class: 'date', x: left, y: 1567 }, label);
    });
    add(svg, 'text', { class: 'peak', x: 1416, y: 131 }, '13.80');
    add(svg, 'text', { class: 'peak', x: 1570, y: 1505 }, '11.36');
    add(svg, 'path', { class: 'peak-line', d: 'M1420 76L1446 67M1573 1506L1600 1516' });
}

function drawVolume() {
    const svg = document.getElementById('volume');
    add(svg, 'path', { class: 'grid', d: 'M24 354H2250' });
    volumeTops.forEach((top, i) => {
        if (volumeDays[i] === 'r') {
            add(svg, 'rect', { class: 'vol-up', x: x(i) - 12, y: top, width: 24, height: 560 - top });
        } else {
            add(svg, 'rect', { class: 'vol-down', x: x(i) - 14, y: top, width: 28, height: 564 - top });
        }
    });
    drawLines(svg, volumeLines);
    add(svg, 'path', { class: 'frame', d: 'M12 566H2388' });
    add(svg, 'text', { class: 'axis axis-amount', x: 2390, y: 211 }, '6.46亿');
    add(svg, 'text', { class: 'axis axis-amount', x: 2390, y: 401 }, '3.23亿');
}

function drawIndicator() {
    const svg = document.getElementById('indicator');
    const line = ys => 'M' + ys.map((y, i) => `${x(i)} ${y}`).join('L');
    add(svg, 'path', { class: 'grid', d: 'M36 907H2250' });
    add(svg, 'path', { class: 'grid level-high', d: 'M36 818H1722' });
    add(svg, 'path', { class: 'grid level-low', d: 'M36 1035H1722' });
    add(svg, 'path', { class: 'curve curve-cost', d: line(cost) });
    add(svg, 'path', { class: 'curve curve-5', d: line(chips) });
    add(svg, 'path', { class: 'buy', d: `M${x(45)} 902l23 46h-46z` });
    add(svg, 'circle', { class: 'buy', cx: x(45), cy: 890, r: 9 });
    add(svg, 'path', { class: 'sell', d: `M${x(48)} 952l22-46h-44z` });
    add(svg, 'circle', { class: 'sell', cx: x(48), cy: 962, r: 9 });
    [['80', 802], ['50', 924], ['20', 1047]].forEach(([label, y]) => {
        add(svg, 'text', { class: 'axis', x: 2386, y }, label);
    });
}

drawKline();
drawVolume();
drawIndicator();
```
